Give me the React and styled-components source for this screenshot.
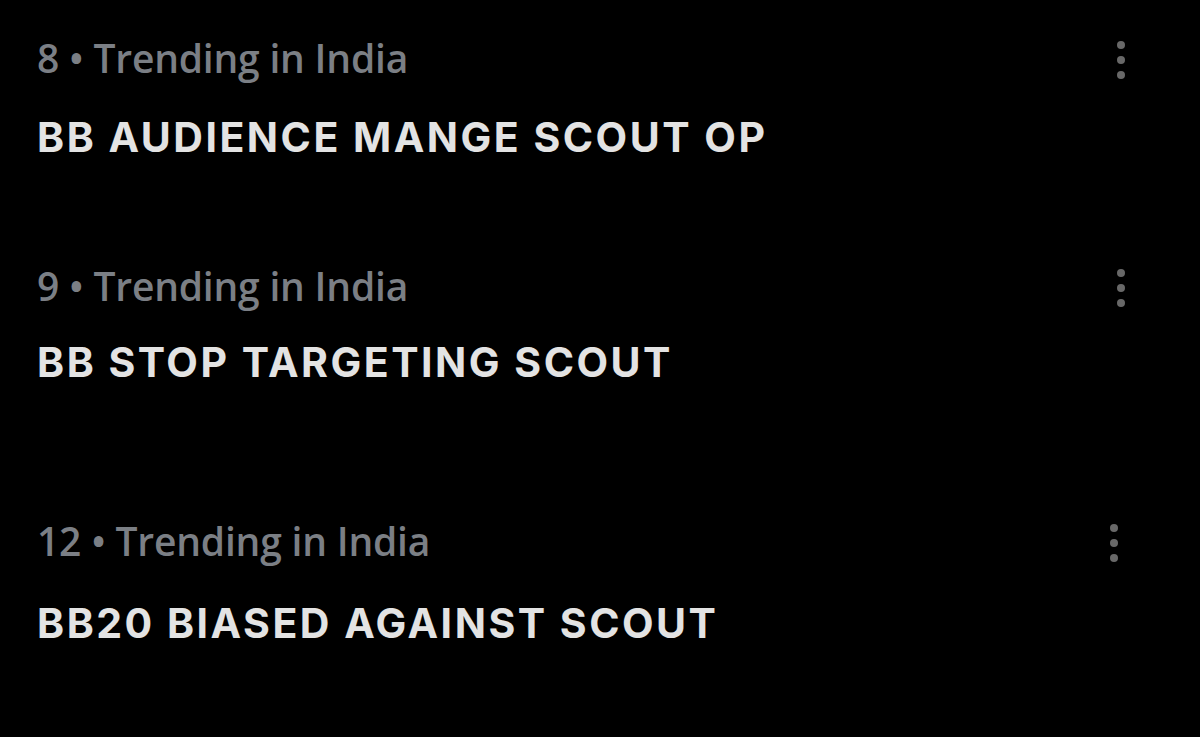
import React from "react";
import styled, { createGlobalStyle } from "styled-components";

const GlobalStyle = createGlobalStyle`
  html, body {
    margin: 0;
    padding: 0;
    background: #000;
  }
`;

const Page = styled.div`
  width: 1200px;
  height: 737px;
  background: #000;
  padding: 33px 0 0 37px;
  box-sizing: border-box;
  overflow: hidden;
`;

const Trend = styled.div`
  display: flex;
  flex-direction: column;
  margin-top: ${(p) => p.$gap || 0}px;
  padding-right: ${(p) => p.$right || 75}px;
`;

const Header = styled.div`
  display: flex;
  align-items: center;
  justify-content: space-between;
  height: 50px;
`;

const Meta = styled.span`
  font-family: "Open Sans", "Noto Sans", sans-serif;
  font-weight: 600;
  font-size: 39px;
  line-height: 50px;
  color: #7b7f85;
  letter-spacing: -0.2px;
`;

const Title = styled.div`
  margin-top: ${(p) => p.$gap || 29}px;
  font-family: Inter, "Liberation Sans", Arial, sans-serif;
  font-weight: 700;
  font-size: 41px;
  line-height: 50px;
  letter-spacing: 2.5px;
  color: #e3e3e3;
`;

const Menu = styled.div`
  display: flex;
  flex-direction: column;
  gap: 7px;
  margin-top: 4px;
`;

const Dot = styled.span`
  width: 8px;
  height: 8px;
  border-radius: 50%;
  background: #686868;
`;

const trends = [
  { rank: 8, title: "BB AUDIENCE MANGE SCOUT OP", gap: 0, right: 75, titleGap: 29 },
  { rank: 9, title: "BB STOP TARGETING SCOUT", gap: 99, right: 75, titleGap: 26 },
  { rank: 12, title: "BB20 BIASED AGAINST SCOUT", gap: 129, right: 82, titleGap: 32 },
];

const App = () => {
  return (
    <Page>
      <GlobalStyle />
      {trends.map((t) => (
        <Trend key={t.rank} $gap={t.gap} $right={t.right}>
          <Header>
            <Meta>{t.rank} • Trending in India</Meta>
            <Menu>
              <Dot />
              <Dot />
              <Dot />
            </Menu>
          </Header>
          <Title $gap={t.titleGap}>{t.title}</Title>
        </Trend>
      ))}
    </Page>
  );
};

export default App;
